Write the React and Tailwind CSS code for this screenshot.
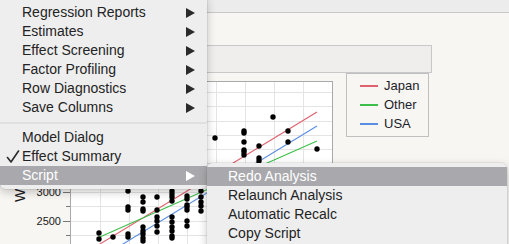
import React from 'react';

const upper = [
  [215, 57], [244, 50], [244, 52], [244, 61], [244, 69], [244, 71], [244, 74],
  [259, 65], [259, 77], [259, 80], [273, 36], [288, 50], [288, 61], [317, 68],
];

const columns = [
  [99, [152, 158]],
  [113, [156]],
  [128, [105, 110, 126, 129, 153, 156]],
  [143, [116, 121, 128, 130, 146, 150, 153, 157, 160]],
  [157, [116, 129, 136, 140, 145, 151]],
  [172, [110, 113, 116, 120, 136, 141, 146, 150, 155, 157]],
  [187, [115, 118, 124, 126, 129, 140, 145]],
  [201, [110, 116, 121, 125, 130]],
];

const points = [
  ...upper,
  ...columns.flatMap(([x, ys]) => ys.map((y) => [x, y])),
];

const gridX = [100, 129, 158, 187, 216, 245, 274, 303];
const gridY = [-3, -2, -1, 0, 1, 2, 3, 4, 5, 6, 7].map((k) => 111 - 14.3 * k);

const Arrow = ({ light }) => (
  <svg width="9" height="10" viewBox="0 0 9 10" className="absolute right-[12px] top-[5px]">
    <polygon points="0,0 9,5 0,10" fill={light ? '#ffffff' : '#2a2a2a'} />
  </svg>
);

const MenuRow = ({ label, arrow, checked, active, indent = 'pl-[22px]' }) => (
  <div
    className={`relative h-[19px] leading-[19px] text-[14px] ${indent} ${
      active ? 'bg-[#a9a9ad] text-white' : 'text-[#232323]'
    }`}
  >
    {checked && (
      <svg width="14" height="14" viewBox="0 0 14 14" className="absolute left-[6px] top-[3px]">
        <path d="M1.5 7.5 L5 12 L12.5 1" fill="none" stroke="#2a2a2a" strokeWidth="1.6" strokeLinecap="round" strokeLinejoin="round" />
      </svg>
    )}
    {label}
    {arrow && <Arrow light={active} />}
  </div>
);

const Plot = () => (
  <svg width="333" height="175" className="mt-[8px] shrink-0">
    <rect x="70.5" y="0.5" width="262" height="200" fill="#ffffff" stroke="#a9a9a9" />
    {gridX.map((x) => (
      <line key={`gx${x}`} x1={x + 0.5} y1="1" x2={x + 0.5} y2="175" stroke="#e4e4e4" />
    ))}
    {gridY.map((y) => (
      <line key={`gy${y}`} x1="71" y1={Math.round(y) + 0.5} x2="332" y2={Math.round(y) + 0.5} stroke="#e4e4e4" />
    ))}
    {gridY.map((y, i) => (
      <line
        key={`t${y}`}
        x1={i % 2 === 1 ? 63 : 66}
        y1={Math.round(y) + 0.5}
        x2="70"
        y2={Math.round(y) + 0.5}
        stroke="#777777"
      />
    ))}
    <text x="61" y="115" textAnchor="end" fontSize="11" fill="#1a1a1a">3000</text>
    <text x="61" y="143.5" textAnchor="end" fontSize="11" fill="#1a1a1a">2500</text>
    <text x="25" y="121" fontSize="14" fill="#1a1a1a" transform="rotate(-90 25 121)">Weight</text>
    <line x1="97" y1="164.8" x2="317" y2="31" stroke="#e0606e" strokeWidth="1.1" />
    <line x1="110" y1="170.9" x2="317" y2="45" stroke="#5a8ee2" strokeWidth="1.1" />
    <line x1="97" y1="157.2" x2="317" y2="60" stroke="#3cbf4a" strokeWidth="1.1" />
    {points.map(([x, y], i) => (
      <circle key={i} cx={x} cy={y} r="2.7" fill="#000000" />
    ))}
  </svg>
);

const legend = [
  ['Japan', 'bg-[#e0606e]'],
  ['Other', 'bg-[#3cbf4a]'],
  ['USA', 'bg-[#5a8ee2]'],
];

const App = () => {
  return (
    <div className="relative w-[509px] h-[244px] overflow-hidden bg-[#f7f6f3] font-['Liberation_Sans',Arial,sans-serif]">
      <div className="h-[13px] bg-[#ececec] border-b border-[#c8c8c8]" />
      <div className="pt-[32px] pl-[40px]">
        <div className="h-[28px] w-[392px] border border-[#c8c8c8] bg-[#efeeec]" />
      </div>
      <div className="flex items-start">
        <Plot />
        <div className="ml-[13px] w-[83px] h-[64px] border border-[#c0c0c0] pt-[2px] pl-[13px]">
          {legend.map(([name, color]) => (
            <div key={name} className="flex items-center h-[19px] gap-[6px]">
              <div className={`w-[18px] h-[2px] ${color}`} />
              <span className="text-[13px] text-[#1c1c2a]">{name}</span>
            </div>
          ))}
        </div>
      </div>

      {/* main context menu */}
      <div className="absolute left-0 top-[-5px] w-[207px] pt-[8px] pb-[4px] rounded-[6px] bg-[#eeeeee] shadow-[0_3px_10px_rgba(0,0,0,0.22)] ring-1 ring-black/5">
        <MenuRow label="Regression Reports" arrow />
        <MenuRow label="Estimates" arrow />
        <MenuRow label="Effect Screening" arrow />
        <MenuRow label="Factor Profiling" arrow />
        <MenuRow label="Row Diagnostics" arrow />
        <MenuRow label="Save Columns" arrow />
        <div className="h-[11px] pt-[5px]">
          <div className="h-[2px] bg-[#e0e0e0]" />
        </div>
        <MenuRow label="Model Dialog" />
        <MenuRow label="Effect Summary" checked />
        <MenuRow label="Script" arrow active />
      </div>

      {/* script submenu */}
      <div className="absolute left-[207px] top-[163px] w-[300px] pt-[4px] pb-[20px] rounded-[6px] bg-[#eeeeee] shadow-[0_3px_10px_rgba(0,0,0,0.22)] ring-1 ring-black/5">
        <MenuRow label="Redo Analysis" active indent="pl-[21px]" />
        <MenuRow label="Relaunch Analysis" indent="pl-[21px]" />
        <MenuRow label="Automatic Recalc" indent="pl-[21px]" />
        <MenuRow label="Copy Script" indent="pl-[21px]" />
      </div>
    </div>
  );
};

export default App;
